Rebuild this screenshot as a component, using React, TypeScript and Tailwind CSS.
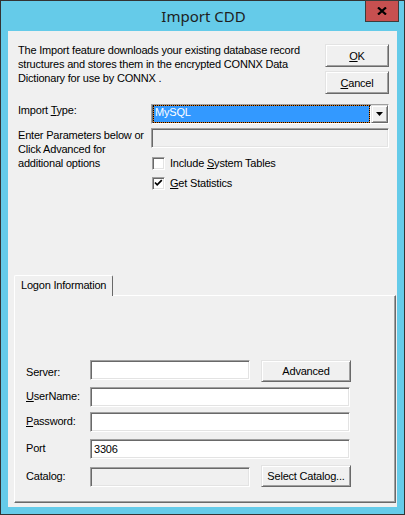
const sunken =
  "border border-t-[#a0a0a0] border-l-[#a0a0a0] border-b-white border-r-white shadow-[inset_1px_1px_0_#696969,inset_-1px_-1px_0_#e3e3e3]"
const raised =
  "border border-t-[#e3e3e3] border-l-[#e3e3e3] border-b-[#696969] border-r-[#696969] shadow-[inset_1px_1px_0_#fff,inset_-1px_-1px_0_#a0a0a0] bg-[#f0f0f0]"

function Button({ children, className }: { children: React.ReactNode; className: string }) {
  return <div className={`${raised} ${className} flex items-center justify-center`}>{children}</div>
}

function Edit({ className, disabled, value }: { className: string; disabled?: boolean; value?: string }) {
  return (
    <div className={`${sunken} ${className} h-[20px] pl-[3px] pt-[2px] ${disabled ? "bg-[#f0f0f0]" : "bg-white"}`}>
      {value}
    </div>
  )
}

function Check({ checked, children }: { checked?: boolean; children: React.ReactNode }) {
  return (
    <div className="flex items-center h-[14px]">
      <div className={`${sunken} w-[13px] h-[13px] bg-white flex items-center justify-center ml-[1px]`}>
        {checked && (
          <svg width="9" height="9" viewBox="0 0 9 9">
            <path d="M1 3.5 L3.2 5.8 L7.8 1.2" stroke="#000" strokeWidth="1.7" fill="none" />
          </svg>
        )}
      </div>
      <span className="ml-[5px]">{children}</span>
    </div>
  )
}

export default function App() {
  return (
    <div className="relative w-[405px] h-[515px] bg-[#65cbe9] border border-[#333] px-[7px] pb-[7px] font-['Liberation_Sans',Arial,sans-serif] text-[11px] leading-[14px] tracking-[-0.2px] text-black">
      <div className="h-[30px] flex items-center justify-center">
        <span className="font-['Noto_Sans',sans-serif] text-[15px] tracking-normal text-[#1e1e1e] leading-[20px] ml-[2px]">Import CDD</span>
      </div>
      <div className="absolute top-[-1px] right-[5px] w-[34px] h-[22px] bg-[#c75050] border border-[#3c3c3c] flex items-center justify-center">
        <svg width="10" height="8" viewBox="0 0 10 8">
          <path d="M1 0.5 L9 7.5 M9 0.5 L1 7.5" stroke="#000" strokeWidth="2.2" />
        </svg>
      </div>

      <div className="h-[476px] bg-[#f0f0f0] flex flex-col">
        {/* intro + OK / Cancel */}
        <div className="flex pt-[12px] pl-[10px] pr-[8px]">
          <p className="flex-1 whitespace-nowrap">
            The Import feature downloads your existing database record
            <br />
            structures and stores them in the encrypted CONNX Data
            <br />
            Dictionary for use by CONNX .
          </p>
          <div className="w-[64px] mt-[1px] flex flex-col gap-[4px]">
            <Button className="h-[23px]">
              <span><u>O</u>K</span>
            </Button>
            <Button className="h-[23px]">
              <span><u>C</u>ancel</span>
            </Button>
          </div>
        </div>

        {/* import type */}
        <div className="flex mt-[10px]">
          <div className="w-[143px] pl-[10px] -mt-[1px]">
            Import <u>T</u>ype:
          </div>
          <div className={`${sunken} w-[238px] h-[20px] bg-white flex`}>
            <div className="flex-1 ml-[1px] bg-[#e07b1f]">
              <div className="h-full border border-dotted border-black bg-[#3399ff] bg-clip-padding text-white pl-[1px] leading-[12px]">
                MySQL
              </div>
            </div>
            <Button className="w-[17px] h-full ml-[1px]">
              <svg width="7" height="4" viewBox="0 0 7 4">
                <path d="M0 0 H7 L3.5 4 Z" fill="#000" />
              </svg>
            </Button>
          </div>
        </div>

        {/* parameters + options */}
        <div className="flex mt-[4px]">
          <div className="w-[143px] pl-[10px] whitespace-nowrap">
            Enter Parameters below or
            <br />
            Click Advanced for
            <br />
            additional options
          </div>
          <div className="w-[238px]">
            <Edit className="w-full" disabled />
            <div className="mt-[8px]">
              <Check>
                Include <u>S</u>ystem Tables
              </Check>
            </div>
            <div className="mt-[6px]">
              <Check checked>
                <u>G</u>et Statistics
              </Check>
            </div>
          </div>
        </div>

        {/* tabs */}
        <div className="mt-auto pb-[4px] pl-[6px] pr-[1px]">
          <div className="relative z-10 -mb-[1px] w-[99px] h-[21px] border border-b-0 border-t-white border-l-white border-r-[#696969] rounded-t-[2px] bg-[#f0f0f0] pl-[6px] pt-[2px]">
            Logon Information
          </div>
          <div className="h-[208px] border border-t-white border-l-white border-b-[#696969] border-r-[#696969] shadow-[inset_-1px_-1px_0_#a0a0a0] pl-[11px] pt-[64px]">
            <div className="flex items-start">
              <div className="w-[64px] pt-[5px]">Server:</div>
              <Edit className="w-[160px]" />
              <Button className="w-[90px] h-[22px] ml-[11px]">Advanced</Button>
            </div>
            <div className="flex items-start mt-[5px]">
              <div className="w-[64px] pt-[2px]">
                <u>U</u>serName:
              </div>
              <Edit className="w-[260px]" />
            </div>
            <div className="flex items-start mt-[5px]">
              <div className="w-[64px] pt-[2px]">
                <u>P</u>assword:
              </div>
              <Edit className="w-[260px]" />
            </div>
            <div className="flex items-start mt-[7px]">
              <div className="w-[64px] pt-[2px]">Port</div>
              <Edit className="w-[260px]" value="3306" />
            </div>
            <div className="flex items-start mt-[6px]">
              <div className="w-[64px] pt-[4px]">Catalog:</div>
              <Edit className="w-[160px] mt-[2px]" disabled />
              <Button className="w-[90px] h-[22px] ml-[11px]">Select Catalog...</Button>
            </div>
          </div>
        </div>
      </div>
    </div>
  )
}
